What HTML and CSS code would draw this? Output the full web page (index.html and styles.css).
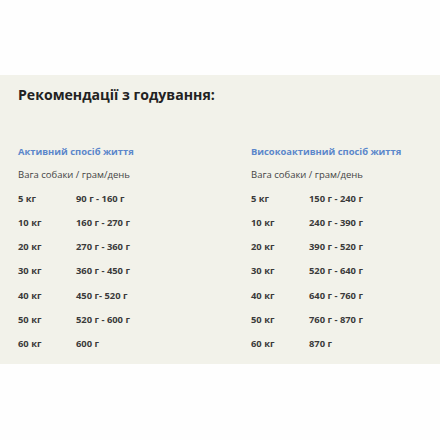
FILE: index.html
```html
<!DOCTYPE html>
<html lang="uk">
<head>
<meta charset="utf-8">
<link rel="stylesheet" href="styles.css">
</head>
<body>
<section class="panel">
  <h2 class="title">Рекомендації з годування:</h2>
  <div class="cols">
    <div class="col">
      <h3 class="sub">Активний спосіб життя</h3>
      <p class="note">Вага собаки / грам/день</p>
      <div class="rows">
        <span>5 кг</span><span>90 г - 160 г</span>
        <span>10 кг</span><span>160 г - 270 г</span>
        <span>20 кг</span><span>270 г - 360 г</span>
        <span>30 кг</span><span>360 г - 450 г</span>
        <span>40 кг</span><span>450 г- 520 г</span>
        <span>50 кг</span><span>520 г - 600 г</span>
        <span>60 кг</span><span>600 г</span>
      </div>
    </div>
    <div class="col">
      <h3 class="sub">Високоактивний спосіб життя</h3>
      <p class="note">Вага собаки / грам/день</p>
      <div class="rows">
        <span>5 кг</span><span>150 г - 240 г</span>
        <span>10 кг</span><span>240 г - 390 г</span>
        <span>20 кг</span><span>390 г - 520 г</span>
        <span>30 кг</span><span>520 г - 640 г</span>
        <span>40 кг</span><span>640 г - 760 г</span>
        <span>50 кг</span><span>760 г - 870 г</span>
        <span>60 кг</span><span>870 г</span>
      </div>
    </div>
  </div>
</section>
</body>
</html>
```
FILE: styles.css
```css
html, body {
  margin: 0;
  padding: 0;
  background: #fefefe;
  font-family: "Open Sans", "Liberation Sans", sans-serif;
}
.panel {
  margin-top: 75px;
  height: 289px;
  box-sizing: border-box;
  background: #f2f2ea;
  padding: 8px 18px 0 18px;
}
.title {
  margin: 0;
  font-size: 14.1px;
  font-weight: 700;
  color: #222;
  line-height: 24px;
}
.cols {
  display: grid;
  grid-template-columns: 233px 1fr;
  margin-top: 38px;
}
.sub {
  margin: 0;
  font-size: 9.4px;
  font-weight: 700;
  color: #5b87cb;
  line-height: 14px;
}
.note {
  margin: 9px 0 0 0;
  font-size: 9.5px;
  color: #444;
  line-height: 14px;
}
.rows {
  display: grid;
  grid-template-columns: 58px 1fr;
  row-gap: 10.3px;
  margin-top: 9.5px;
  font-size: 9.4px;
  font-weight: 700;
  color: #3a3a3a;
  line-height: 14px;
}
```
